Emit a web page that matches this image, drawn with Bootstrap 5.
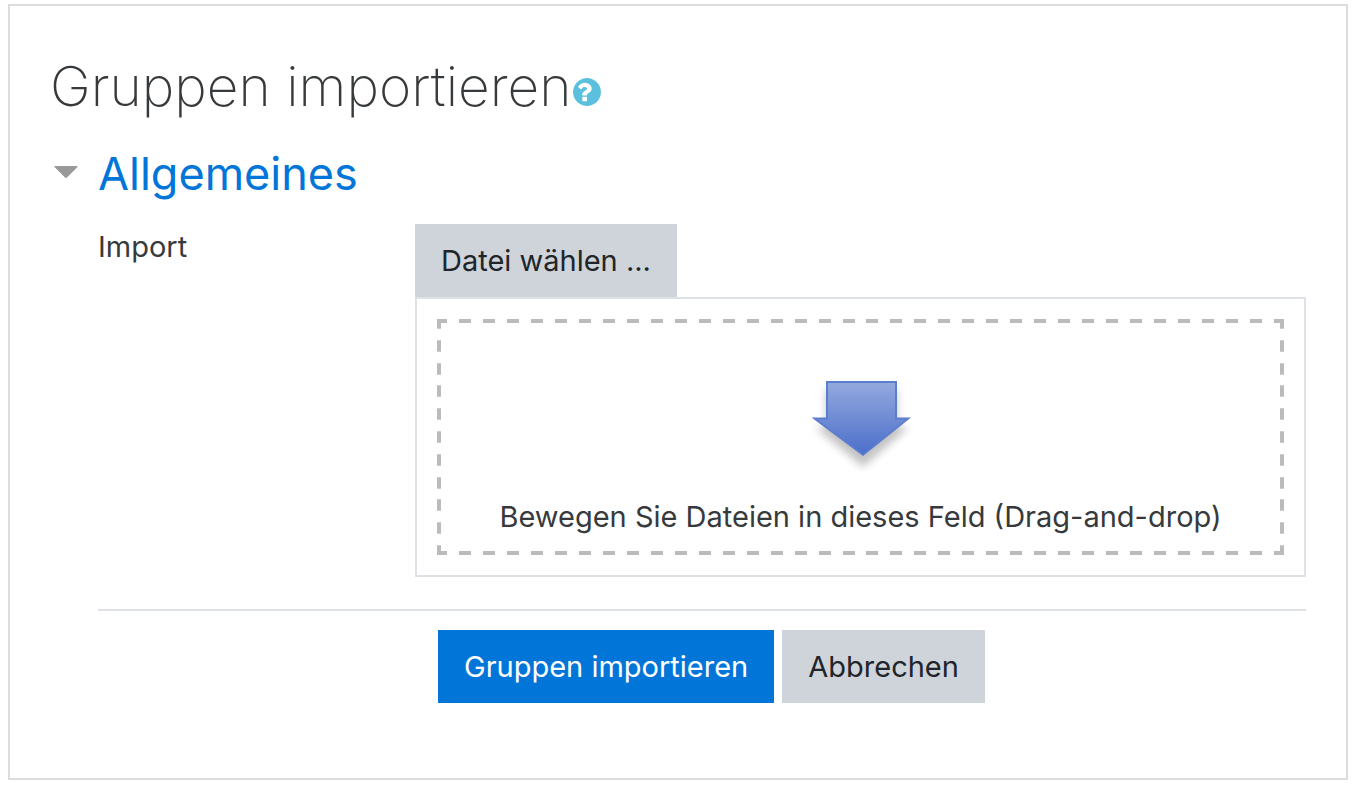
<!DOCTYPE html>
<html lang="de">
<head>
<meta charset="utf-8">
<meta name="viewport" content="width=device-width, initial-scale=1">
<title>Gruppen importieren</title>
<link href="https://cdn.jsdelivr.net/npm/bootstrap@5.3.0/dist/css/bootstrap.min.css" rel="stylesheet">
<style>
body{font-family:Inter,"Liberation Sans",sans-serif;font-size:29px;line-height:46px;color:#373a3c;background:#fff}
.page-box{margin:4px 6px 10px 8px;border:2px solid #ddd;padding:40px 40px 75px}
.page-title{font-size:55px;line-height:80px;font-weight:200;margin-bottom:20px}
.help-btn{color:#5bc0de;padding-top:11px;margin-left:1px}
.section-title{font-size:45px;line-height:56px;font-weight:400;margin-bottom:22px}
.section-title a{color:#0275d8}
.toggle-arrow{width:48px;padding-left:4px}
.form-part{margin-left:48px}
.field-label{flex:0 0 317px}
.btn{--bs-btn-font-size:29px;--bs-btn-line-height:45px;--bs-btn-padding-x:26px;--bs-btn-padding-y:14px;--bs-btn-border-width:0;--bs-btn-border-radius:0}
.btn-grey{--bs-btn-bg:#ced4da;--bs-btn-color:#212529;--bs-btn-hover-bg:#bcc3ca}
.btn-main{--bs-btn-bg:#0275d8;--bs-btn-color:#fff;--bs-btn-hover-bg:#025aa5;--bs-btn-hover-color:#fff}
.file-box{border:2px solid #dee2e6;padding:20px}
/* long dashes: every tile is half a dash, a gap, half a dash */
.drop-zone{padding:49px 8px 11px;gap:18px;border:4px solid #bbb;border-image:url("data:image/svg+xml,%3Csvg xmlns='http://www.w3.org/2000/svg' width='32' height='32'%3E%3Cpath fill='%23bbb' d='M0 0h10v4H4v6H0zM22 0h10v10h-4V4h-6zM0 22h4v6h6v4H0zM28 22h4v10H22v-4h6z'/%3E%3C/svg%3E") 4 / 4px round}
.action-row{border-top:2px solid #dee2e6;margin-top:32px;padding:19px 0 0 340px}
</style>
</head>
<body>
<main class="page-box">
  <h1 class="page-title d-flex align-items-center">Gruppen importieren
    <button type="button" class="help-btn d-flex border-0 bg-transparent pb-0 px-0" aria-label="Hilfe">
      <svg width="28" height="28" viewBox="128 128 1536 1536" fill="currentColor" aria-hidden="true"><path d="M896 1376v-192q0-14-9-23t-23-9h-192q-14 0-23 9t-9 23v192q0 14 9 23t23 9h192q14 0 23-9t9-23zm256-672q0-88-55.500-163t-138.500-116-170-41q-243 0-371 213-15 24 8 42l132 100q7 6 19 6 16 0 25-12 53-68 86-92 34-24 86-24 48 0 85.500 26t37.500 59q0 38-20 61t-68 45q-63 28-115.500 86.500t-52.500 125.500v36q0 14 9 23t23 9h192q14 0 23-9t9-23q0-19 21.500-49.500t54.500-49.500q32-18 49-28.500t46-35 44.500-48 28-60.500 12.500-81zm512 192q0 209-103 385.500t-279.500 279.500-385.500 103-385.500-103-279.500-279.500-103-385.500 103-385.500 279.500-279.500 385.500-103 385.500 103 279.500 279.500 103 385.500z" transform="translate(0 0)"/></svg>
    </button>
  </h1>
  <form>
    <h2 class="section-title">
      <a class="d-flex align-items-center text-decoration-none" href="#general" aria-expanded="true">
        <span class="toggle-arrow d-flex"><svg width="24" height="16" viewBox="0 0 24 16" aria-hidden="true"><path fill="#999" d="M1 0h22q1 0 .5 1L13 11.500q-1 .8-2 0L.5 1Q0 0 1 0z"/></svg></span>Allgemeines</a>
    </h2>
    <div class="form-part" id="general">
      <div class="d-flex">
        <label class="field-label" for="choose">Import</label>
        <div class="flex-fill">
          <button type="button" id="choose" class="btn btn-grey d-block">Datei wählen ...</button>
          <div class="file-box">
            <div class="drop-zone d-flex flex-column align-items-center text-center">
              <svg width="108" height="104" viewBox="0 0 108 104" aria-hidden="true">
                <defs>
                  <linearGradient id="blue" x1="0" y1="0" x2="0" y2="1"><stop offset="0" stop-color="#92a8de"/><stop offset="1" stop-color="#4c6fca"/></linearGradient>
                  <filter id="soft" x="-20%" y="-20%" width="140%" height="150%"><feGaussianBlur stdDeviation="4"/></filter>
                </defs>
                <path d="M19 18h71v37h12L56 95 8 55h11z" fill="#000" opacity=".24" filter="url(#soft)"/>
                <path d="M19 9h71v36.500h14L56 84 4.500 45.500H19z" fill="#5c7dce"/>
                <path d="M21 11h67v36.500h11L56 82 10.500 47.500H21z" fill="url(#blue)"/>
              </svg>
              <div>Bewegen Sie Dateien in dieses Feld (Drag-and-drop)</div>
            </div>
          </div>
        </div>
      </div>
      <div class="action-row d-flex gap-2">
        <button type="submit" class="btn btn-main">Gruppen importieren</button>
        <button type="button" class="btn btn-grey">Abbrechen</button>
      </div>
    </div>
  </form>
</main>
<script src="https://cdn.jsdelivr.net/npm/bootstrap@5.3.0/dist/js/bootstrap.bundle.min.js"></script>
</body>
</html>
